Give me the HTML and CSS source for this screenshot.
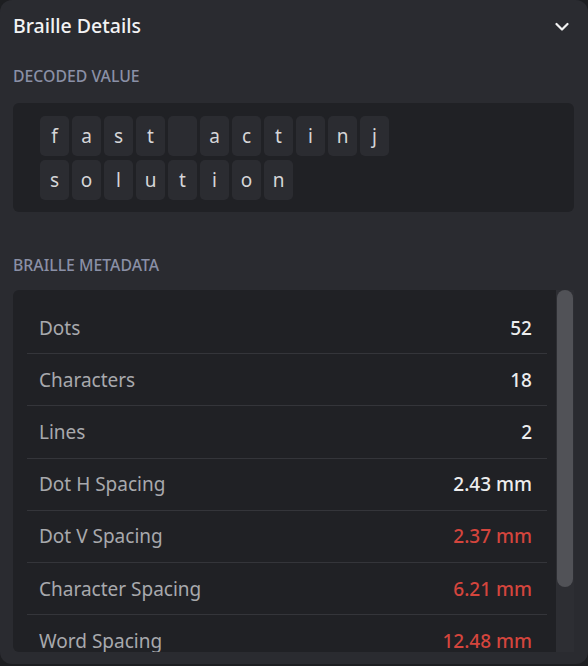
FILE: index.html
```html
<!DOCTYPE html>
<html lang="en">
<head>
<meta charset="utf-8">
<title>Braille Details</title>
<link rel="stylesheet" href="styles.css">
</head>
<body>
<div class="panel">
  <div class="header">
    <span class="title">Braille Details</span>
    <svg class="chevron" width="14" height="10" viewBox="0 0 14 10"><polyline points="1.5,2 7,7.5 12.5,2" fill="none" stroke="#f2f2f2" stroke-width="2.2" stroke-linecap="round" stroke-linejoin="round"/></svg>
  </div>
  <div class="section-label first">Decoded Value</div>
  <div class="decoded">
    <div class="tile-row">
      <span class="tile">f</span><span class="tile">a</span><span class="tile">s</span><span class="tile">t</span><span class="tile"> </span><span class="tile">a</span><span class="tile">c</span><span class="tile">t</span><span class="tile">i</span><span class="tile">n</span><span class="tile">j</span>
    </div>
    <div class="tile-row">
      <span class="tile">s</span><span class="tile">o</span><span class="tile">l</span><span class="tile">u</span><span class="tile">t</span><span class="tile">i</span><span class="tile">o</span><span class="tile">n</span>
    </div>
  </div>
  <div class="section-label second">Braille Metadata</div>
  <div class="meta">
    <div class="meta-list">
      <div class="row"><span class="label">Dots</span><span class="value">52</span></div>
      <div class="row"><span class="label">Characters</span><span class="value">18</span></div>
      <div class="row"><span class="label">Lines</span><span class="value">2</span></div>
      <div class="row"><span class="label">Dot H Spacing</span><span class="value">2.43 mm</span></div>
      <div class="row"><span class="label">Dot V Spacing</span><span class="value bad">2.37 mm</span></div>
      <div class="row"><span class="label">Character Spacing</span><span class="value bad">6.21 mm</span></div>
      <div class="row"><span class="label">Word Spacing</span><span class="value bad">12.48 mm</span></div>
    </div>
    <div class="scrollbar"><div class="thumb"></div></div>
  </div>
</div>
</body>
</html>
```

FILE: styles.css
```css
* { box-sizing: border-box; }
html, body { margin: 0; padding: 0; }
body {
  background: #1d1e21;
  font-family: "Noto Sans", "Open Sans", sans-serif;
  width: 588px;
  height: 666px;
  overflow: hidden;
}
.panel {
  width: 588px;
  height: 664px;
  background: #2a2b30;
  border-radius: 12px;
  padding: 0 14px 0 13px;
  display: flex;
  flex-direction: column;
}
.header {
  height: 52px;
  display: flex;
  align-items: center;
  justify-content: space-between;
}
.title {
  font-size: 19.5px;
  font-weight: 500;
  color: #f3f3f4;
  line-height: 24px;
}
.chevron { margin-right: 5px; margin-top: 1px; }
.section-label {
  font-size: 15.8px;
  line-height: 20px;
  font-weight: 500;
  color: #8a90a6;
  text-transform: uppercase;
}
.section-label.first { margin-top: 14px; margin-bottom: 17px; }
.section-label.second { margin-top: 43px; margin-bottom: 15px; }
.decoded {
  background: #202125;
  border-radius: 6px;
  padding: 13px 27px 12px;
  display: flex;
  flex-direction: column;
  gap: 4px;
}
.tile-row { display: flex; gap: 3px; }
.tile {
  width: 29px;
  height: 40px;
  background: #2b2c31;
  border-radius: 5px;
  display: flex;
  align-items: center;
  justify-content: center;
  color: #d6d6d8;
  font-size: 19px;
  white-space: pre;
}
.meta {
  height: 362px;
  display: flex;
  background: #202125;
  border-radius: 6px 0 0 6px;
  overflow: hidden;
}
.meta-list {
  flex: 1;
  padding: 12px 9px 0 14px;
  overflow: hidden;
}
.scrollbar {
  width: 18px;
  background: #2d2e33;
  padding: 0 1px;
}
.thumb {
  height: 297px;
  background: #515257;
  border-radius: 8px;
}
.row {
  height: 52.2px;
  border-bottom: 1px solid #34353a;
  display: flex;
  align-items: center;
  justify-content: space-between;
  padding: 0 15px 0 12px;
  font-size: 19px;
}
.label { color: #a8a9ad; }
.value { color: #ededee; font-weight: 500; }
.value.bad { color: #d4453d; }
```
